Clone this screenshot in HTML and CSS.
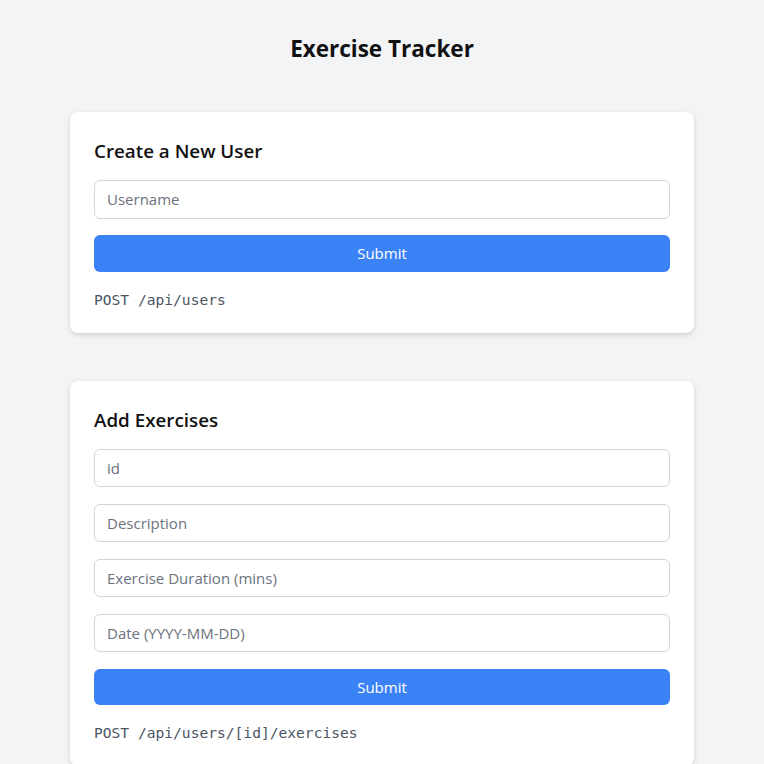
FILE: index.html
```html
<!DOCTYPE html>
<html lang="en">
<head>
<meta charset="utf-8">
<title>Exercise Tracker</title>
<link rel="stylesheet" href="styles.css">
</head>
<body>
<main class="page">
  <h1 class="title">Exercise Tracker</h1>
  <section class="card">
    <h2 class="card-title">Create a New User</h2>
    <form class="form">
      <input class="field" type="text" placeholder="Username">
      <button class="submit" type="button">Submit</button>
    </form>
    <code class="endpoint">POST /api/users</code>
  </section>
  <section class="card">
    <h2 class="card-title">Add Exercises</h2>
    <form class="form">
      <input class="field" type="text" placeholder="id">
      <input class="field" type="text" placeholder="Description">
      <input class="field" type="text" placeholder="Exercise Duration (mins)">
      <input class="field" type="text" placeholder="Date (YYYY-MM-DD)">
      <button class="submit" type="button">Submit</button>
    </form>
    <code class="endpoint">POST /api/users/[id]/exercises</code>
  </section>
</main>
</body>
</html>
```
FILE: styles.css
```css
* { box-sizing: border-box; }
html, body { margin: 0; padding: 0; }
body {
  background: #f3f4f6;
  font-family: "Open Sans", "Noto Sans", sans-serif;
  color: #111827;
}
.page {
  width: 624px;
  margin: 0 auto;
  padding-top: 33px;
  display: flex;
  flex-direction: column;
  gap: 48px;
}
.title {
  margin: 0 0 -1px;
  text-align: center;
  font-size: 22.5px;
  line-height: 32px;
  font-weight: 700;
  color: #111;
}
.card {
  background: #fff;
  border-radius: 8px;
  box-shadow: 0 2px 6px rgba(0,0,0,0.12), 0 1px 2px rgba(0,0,0,0.06);
  padding: 25px 24px 23px;
  display: flex;
  flex-direction: column;
}
.card-title {
  margin: 0 0 15px;
  font-size: 18.8px;
  line-height: 28px;
  font-weight: 600;
  color: #111;
}
.form {
  display: flex;
  flex-direction: column;
  gap: 16.5px;
}
.field {
  height: 38.5px;
  border: 1px solid #d1d5db;
  border-radius: 6px;
  padding: 0 12px;
  font-family: inherit;
  font-size: 15px;
  color: #111;
  background: #fff;
}
.field::placeholder { color: #6b7280; }
.submit {
  height: 36.5px;
  border: none;
  border-radius: 6px;
  background: #3b82f6;
  color: #fff;
  font-family: inherit;
  font-size: 15px;
}
.endpoint {
  margin-top: 18px;
  font-family: "DejaVu Sans Mono", "Liberation Mono", monospace;
  font-size: 14.6px;
  line-height: 20px;
  color: #4b5563;
}
```
